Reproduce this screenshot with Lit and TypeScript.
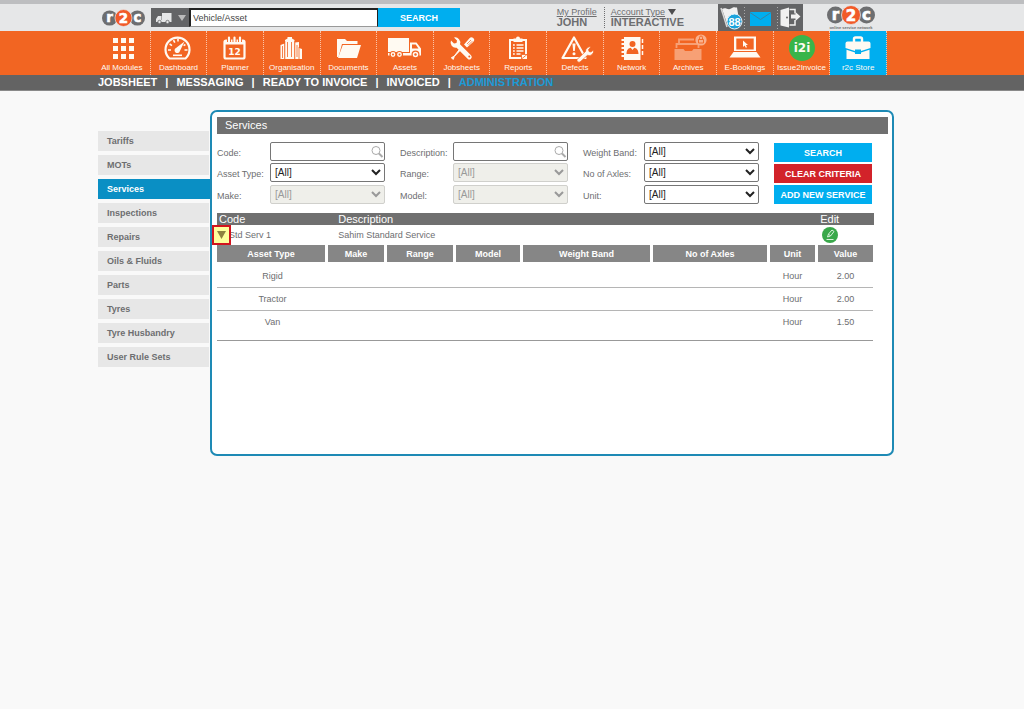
import { LitElement, html, svg, css, nothing } from "lit";
import { customElement, property } from "lit/decorators.js";
import { classMap } from "lit/directives/class-map.js";

const icons: Record<string, unknown> = {
  modules: svg`${[0, 1, 2].map((r) => [0, 1, 2].map((c) => svg`<rect x=${9 + c * 8} y=${5 + r * 8} width="5" height="5"/>`))}`,
  dashboard: svg`
    <path d="M9.5 25.5A12 12 0 1 1 25.5 25.5Z" fill="none" stroke="currentColor" stroke-width="2.2"/>
    <g stroke="currentColor" stroke-width="1.6" fill="none">
      <path d="M8 17h3M9.6 11l2.4 1.6M13.5 7.2l1.3 2.4M18 5.8v2.6M27.5 17h-3M25.4 11.5l-1.8 1.1"/>
    </g>
    <path d="M24.5 8.5L19.8 18.2A2.7 2.7 0 1 1 16 15Z"/>
    <rect x="13" y="21.5" width="9" height="1.6"/>`,
  planner: svg`
    <rect x="7.5" y="7.5" width="20" height="18" rx="1.5" fill="none" stroke="currentColor" stroke-width="2.2"/>
    <path d="M7.5 8h20v3.500h-20Z"/>
    <path d="M12 4v5M17.500 4v5M23 4v5" stroke="#f26522" stroke-width="4"/>
    <path d="M12 4.500v4M17.500 4.500v4M23 4.500v4" stroke="currentColor" stroke-width="2.200" stroke-linecap="round"/>
    <text x="17.500" y="21.500" text-anchor="middle" font-size="9" font-weight="bold" font-family="DejaVu Sans, sans-serif">12</text>`,
  organisation: svg`
    <path d="M6.500 26V12l4-1.500V26ZM11 26V7l2.500-1.500V4h4.500v1.500l2.500 1.500V26ZM21 26V9.500l4-.5v17ZM25 26V15l3 1v10Z"/>
    <g stroke="#f26522" stroke-width=".8"><path d="M8.500 13v12M13.500 9v15M17.500 9v15M23 12v12M10.800 8v18M20.800 8v18M25 14v12"/></g>`,
  documents: svg`<path d="M7 24V6h8l2 2h10.500v3H12L8.500 24Z"/><path d="M12.800 12H31l-4 13H8Z"/>`,
  assets: svg`
    <path d="M1 5h21v14H1Z"/><path d="M23 9.500h6.500l4.500 6v7H1V20h22Z"/>
    <path d="M25 11.500h3.700l2.800 4H25Z" fill="#f26522"/>
    <g stroke="#f26522" stroke-width="1.200"><circle cx="6" cy="21.500" r="3"/><circle cx="12.500" cy="21.500" r="3"/><circle cx="28.500" cy="21.500" r="3.400"/></g>
    <g fill="#f26522"><circle cx="6" cy="21.500" r="1"/><circle cx="12.500" cy="21.500" r="1"/><circle cx="28.500" cy="21.500" r="1.200"/></g>`,
  jobsheets: svg`
    <path d="M7 7.500l3 3 2.500-.5.500-2.500-3-3a5.200 5.200 0 0 1 6 6.800l11 11a2.400 2.400 0 0 1-3.400 3.400l-11-11A5.200 5.200 0 0 1 7 7.500Z"/>
    <path d="M20 11.500l5.500-6.300a2.600 2.600 0 0 1 3.900 3.600L23 14.500Z"/>
    <path d="M16.300 17.200l-6 6.200-1 3-2-1.600 3-1.800 5-6.500Z" stroke="currentColor"/>
    <path d="M23 11l4-4M24.300 12.200l4-4" stroke="#f26522" stroke-width=".7"/>
    <circle cx="25.300" cy="23.500" r="1" fill="#f26522"/>`,
  reports: svg`
    <path fill-rule="evenodd" d="M9 6h18v20H9ZM11 8v16h14V8Z"/>
    <path d="M13.500 9V5.500h2.500a2 2 0 0 1 4 0h2.500V9Z"/>
    <path d="M16.500 12h7M16.500 15h7M16.500 18h7M16.500 21h4M13 12h1.800M13 15h1.800M13 18h1.800M13 21h1.800" stroke="currentColor" stroke-width="1.300"/>
    <path d="M21.500 26v-4.500H27Z" stroke="#f26522" stroke-width=".8"/>`,
  defects: svg`
    <path d="M17 4.500L28.500 25H5.500Z" fill="none" stroke="currentColor" stroke-width="2.200" stroke-linejoin="round"/>
    <path d="M15.400 10.500h3.200l-.8 7.500h-1.600Z"/><circle cx="17" cy="20.700" r="1.500"/>
    <path d="M20 26.500l8.500-8a4.500 4.500 0 0 1 5.500-4.500l-2.500 2.500 .5 2 2 .5 2.500-2a4.500 4.500 0 0 1-6 5.300l-7.500 6.700a2.200 2.200 0 0 1-3-2.500Z" stroke="#f26522" stroke-width=".7"/>`,
  network: svg`
    <path d="M10 4h16.500v23H10Z"/>
    <path d="M7.500 7h4M7.500 11h4M7.500 15h4M7.500 19h4M7.500 23h4" stroke="currentColor" stroke-width="1.800"/>
    <path d="M28.500 6v4M28.500 12v4M28.500 18v4" stroke="currentColor" stroke-width="1.500"/>
    <g fill="#f26522"><circle cx="18.500" cy="11" r="3"/><path d="M12.500 21c0-4.500 2.500-6 4.200-6.200l1.800 2.200 1.800-2.200c1.700.2 4.200 1.700 4.200 6.200Z"/></g>`,
  archives: svg`
    <g opacity=".4"><path d="M4.500 16h9l1.500 2h7l1.500-2h8v11h-27Z"/>
    <path d="M6.500 15V11h22v4M9 10V6.500h15" fill="none" stroke="currentColor" stroke-width="1.800"/></g>
    <circle cx="31" cy="7" r="5.600" fill="#f9b08c"/>
    <path d="M28.500 6.500h5v3.500h-5ZM29.500 6.500V4.500a1.500 1.500 0 0 1 3 0v2" fill="none" stroke="#f26522" stroke-width=".9"/>`,
  ebookings: svg`
    <path fill-rule="evenodd" d="M7 3.500h22V18H7ZM9.300 5.500V16.500H26.700V5.500Z"/>
    <path d="M6.500 19h23l4 5.500H2.500Z"/>
    <path d="M16 7.500v6.500l1.600-1.500 1.200 2.300 1.200-.6-1.200-2.200h2.200Z"/>`,
  i2i: svg`
    <circle cx="18" cy="15" r="13" fill="#39b54a"/>
    <text x="18" y="19" text-anchor="middle" font-size="12" font-weight="bold" font-family="DejaVu Sans, sans-serif">i2i</text>`,
  store: svg`
    <path d="M14 9V6a1.500 1.500 0 0 1 1.500-1.500h5A1.500 1.500 0 0 1 22 6v3" fill="none" stroke="currentColor" stroke-width="2.400"/>
    <path d="M5.500 10.500A2 2 0 0 1 7.500 8.500h21a2 2 0 0 1 2 2V15l-9.500 3v-1.500h-6V18L5.500 15Z"/>
    <path d="M6.500 16.800l8.500 2.700V21h6v-1.500l8.500-2.700V26h-23Z"/>`,
};

const modules: [string, string][] = [
  ["All Modules", "modules"], ["Dashboard", "dashboard"], ["Planner", "planner"],
  ["Organisation", "organisation"], ["Documents", "documents"], ["Assets", "assets"],
  ["Jobsheets", "jobsheets"], ["Reports", "reports"], ["Defects", "defects"],
  ["Network", "network"], ["Archives", "archives"], ["E-Bookings", "ebookings"],
  ["Issue2Invoice", "i2i"], ["r2c Store", "store"],
];
const sections = ["JOBSHEET", "MESSAGING", "READY TO INVOICE", "INVOICED", "ADMINISTRATION"];
const tabs = ["Tariffs", "MOTs", "Services", "Inspections", "Repairs", "Oils & Fluids", "Parts", "Tyres", "Tyre Husbandry", "User Rule Sets"];

type Field = { label: string; kind: "text" | "select"; disabled?: boolean };
const fields: Field[] = [
  { label: "Code", kind: "text" }, { label: "Description", kind: "text" }, { label: "Weight Band", kind: "select" },
  { label: "Asset Type", kind: "select" }, { label: "Range", kind: "select", disabled: true }, { label: "No of Axles", kind: "select" },
  { label: "Make", kind: "select", disabled: true }, { label: "Model", kind: "select", disabled: true }, { label: "Unit", kind: "select" },
];
const columns: [string, number][] = [
  ["Asset Type", 111], ["Make", 59], ["Range", 69], ["Model", 67],
  ["Weight Band", 130], ["No of Axles", 117], ["Unit", 48], ["Value", 55],
];
const rates = [
  ["Rigid", "", "", "", "", "", "Hour", "2.00"],
  ["Tractor", "", "", "", "", "", "Hour", "2.00"],
  ["Van", "", "", "", "", "", "Hour", "1.50"],
];

@customElement("r2c-logo")
class R2cLogo extends LitElement {
  @property({ type: Boolean }) tagline = false;
  static styles = css`:host { display: block; } svg { display: block; }`;
  render() {
    return html`<svg width=${this.tagline ? 48 : 43} height=${this.tagline ? 26 : 18} viewBox="0 0 48 ${this.tagline ? 26 : 20}" role="img" aria-label="r2c">
      <circle cx="8.500" cy="10" r="8.500" fill="#6d6e70"/><circle cx="39.500" cy="10" r="8.500" fill="#6d6e70"/>
      <circle cx="24" cy="10" r="9.500" fill="#f15a29" stroke="#e6e7e8" stroke-width=".8"/>
      <g fill="#fff" stroke="#fff" stroke-width=".6" font-family="DejaVu Sans, sans-serif" font-weight="bold" text-anchor="middle">
        <text x="8.500" y="14.500" font-size="15">r</text><text x="24" y="15.500" font-size="15">2</text><text x="39.500" y="14.500" font-size="15">c</text>
      </g>
      ${this.tagline ? svg`<text x="24" y="24" text-anchor="middle" font-size="4" font-weight="bold" fill="#6d6e70" font-family="Liberation Sans, sans-serif">online service network</text>` : nothing}
    </svg>`;
  }
}

@customElement("app-root")
class AppRoot extends LitElement {
  static styles = css`
    :host { display: block; min-height: 100vh; background: #f9f9f9; color: #6d6e70; font: 9px/12px "Liberation Sans", Arial, sans-serif; }
    * { box-sizing: border-box; }
    ul { list-style: none; margin: 0; padding: 0; }
    a { color: inherit; text-decoration: none; }
    button { font: inherit; border: 0; padding: 0; cursor: pointer; }
    svg { display: block; fill: currentColor; }
    .wrap { margin: 0 137px 0 94px; }
    .top { background: #e6e7e8; border-top: 4px solid #bdbec0; }
    .topbar { display: flex; align-items: center; height: 27px; padding: 0 12px 0 8px; }
    .finder { display: flex; height: 19px; margin-left: 6px; }
    .kind { display: flex; align-items: center; gap: 6px; width: 38px; padding-left: 5px; background: #636466; color: #e6e7e8; }
    .finder input { width: 189px; border: 2px solid #222; border-right-width: 1px; border-bottom: 1px solid #999; padding: 0 2px; background: #fff; color: #444; font: inherit; border-radius: 0; }
    .go { width: 82px; background: #00aeef; color: #fff; font-weight: bold; }
    .who { display: flex; margin-left: auto; line-height: 10px; }
    .who div + div { margin-left: 7px; padding-left: 6px; border-left: 1px dotted #6d6e70; }
    .who a { display: flex; align-items: center; gap: 3px; }
    .who u { text-decoration: underline; }
    .who strong { display: block; font-size: 11px; line-height: 11px; }
    .tools { display: flex; height: 27px; margin: 0 24px 0 34px; background: #636466; color: #f1f1f1; }
    .modules { background: #f26522; color: #fffaf2; }
    .modules ul { display: grid; grid-template-columns: repeat(14, 1fr); }
    .modules li { border-right: 1px dotted #fbc4a8; }
    .modules a { display: flex; flex-direction: column; align-items: center; height: 44px; padding-top: 2px; font-size: 8px; line-height: 9px; white-space: nowrap; }
    .modules .store { background: #00aeef; }
    .sections { background: #636363; border-bottom: 1px solid #8a8a8a; color: #fff; font-size: 11px; font-weight: bold; line-height: 15px; }
    .sections ul { display: flex; padding-left: 4px; white-space: nowrap; }
    .sections li + li::before { content: "|"; margin: 0 8px; }
    .sections .on { color: #1c9ad6; }
    main { display: flex; align-items: flex-start; margin: 19px 130px 0 98px; }
    .tabs { display: grid; gap: 4px; width: 112px; padding-top: 21px; font-weight: bold; }
    .tabs a { display: block; margin-right: 1px; padding: 4px 9px; background: #e7e7e7; }
    .tabs .on { margin-right: 0; background: #0a8fc4; color: #fff; }
    .panel { flex: 1; min-height: 346px; padding: 5px 4px 5px 5px; border: 2px solid #1e8ab5; border-radius: 7px; background: #fff; }
    h1 { margin: 0; padding-left: 8px; background: #707070; color: #fff; font-size: 11px; font-weight: normal; line-height: 17px; }
    .criteria { display: flex; justify-content: space-between; margin: 8px 16px 0 0; }
    .fields { display: grid; grid-template-columns: repeat(3, auto); gap: 2px 15px; }
    .field { display: flex; justify-content: space-between; align-items: center; height: 19px; }
    .field label { width: 53px; padding-top: 3px; white-space: nowrap; }
    .field:nth-child(3n) label { width: 61px; }
    .box { position: relative; width: 115px; height: 19px; }
    .box input, .box select { width: 100%; height: 19px; margin: 0; border: 1px solid #767676; border-radius: 2px; background: #fff; color: #222; font: 10px "Liberation Sans", Arial, sans-serif; }
    .box select:disabled { border-color: #d0d0cc; background: #efefea; color: #999; opacity: 1; }
    .box svg { position: absolute; right: 1px; top: 3px; }
    .actions { display: grid; gap: 2px; width: 98px; margin-top: 1px; }
    .actions button { height: 19px; background: #00aeef; color: #fff; font-weight: bold; }
    .actions .clear { background: #d2232a; }
    .results { margin: 9px 14px 0 0; }
    table { width: 100%; table-layout: fixed; border-spacing: 0; }
    td, th { padding: 0; }
    .list > thead th { background: #707070; color: #fff; font-size: 11px; font-weight: normal; text-align: left; padding-left: 2px; }
    .list .desc { padding-left: 1px; }
    .list .mid { text-align: center; padding: 0; }
    .item td { position: relative; height: 20px; }
    .item .code { padding-left: 12px; }
    .expand { position: absolute; z-index: 1; left: -5px; top: 0; width: 19px; height: 20px; padding: 2px 0 0 3px; border: 2px solid #d2141e; background: #ffff9c; color: #8f8240; }
    .edit { display: block; margin: 0 auto; background: none; }
    .rates { width: calc(100% - 1px); }
    .rates th { height: 17px; border-right: 3px solid #fff; background: #868686; color: #fff; font-weight: bold; }
    .rates th:last-child { border-right: 0; }
    .rates td { height: 23px; border-bottom: 1px solid #b5b5b5; text-align: center; }
    .rates td:nth-child(7) { padding-right: 3px; }
    .rates tr:first-child td { height: 26px; padding-top: 3px; }
    .rates tr:last-child td { height: 30px; padding-bottom: 7px; border-color: #999; }
  `;

  private field(f: Field) {
    const id = f.label.toLowerCase().replace(/ /g, "-");
    return html`<div class="field"><label for=${id}>${f.label}:</label><div class="box">
      ${f.kind === "text"
        ? html`<input id=${id} type="text"><svg width="14" height="14" viewBox="0 0 14 14"><g fill="none" stroke="#aaa"><circle cx="6" cy="5.500" r="4"/><path d="M9 8.500l3.500 3.500" stroke-width="2"/></g></svg>`
        : html`<select id=${id} ?disabled=${f.disabled}><option>[All]</option></select>`}
    </div></div>`;
  }

  render() {
    return html`
      <header class="top"><div class="wrap topbar">
        <r2c-logo></r2c-logo>
        <form class="finder" @submit=${(e: Event) => e.preventDefault()}>
          <button class="kind" type="button" aria-label="Search type">
            <svg width="16" height="12" viewBox="0 0 16 12"><path d="M6 1h9.500v9H0V7l2-3h3.500v4H6Z"/><g stroke="#636466" stroke-width=".8"><circle cx="3.500" cy="10" r="1.700"/><circle cx="11.500" cy="10" r="1.700"/></g></svg>
            <svg width="8" height="6" viewBox="0 0 8 6"><path d="M0 0h8L4 6Z" fill="#bbb"/></svg>
          </button>
          <input type="text" aria-label="Vehicle/Asset" value="Vehicle/Asset">
          <button class="go">SEARCH</button>
        </form>
        <div class="who">
          <div><a href="#"><u>My Profile</u></a><strong>JOHN</strong></div>
          <div><a href="#"><u>Account Type</u><svg width="8" height="6" viewBox="0 0 8 6"><path d="M0 0h8L4 6Z" fill="#4d4d4f"/></svg></a><strong>INTERACTIVE</strong></div>
        </div>
        <div class="tools">
          <svg width="85" height="27" viewBox="0 0 85 27" role="img" aria-label="Notifications, messages, log out">
            <path d="M4 5c4-2 6 1.500 9-.5s4-1 6-1l2 12c-4-1-6 2-10 1.500L8.500 18Z"/>
            <path d="M3 4L9 23" stroke="#d8d8d8" stroke-width="1.500" fill="none"/>
            <circle cx="16.500" cy="17.500" r="7.500" fill="#1ba3dc" stroke="#e8f5fb" stroke-width="1"/>
            <text x="16.500" y="21.500" text-anchor="middle" font-size="11" font-weight="bold" fill="#fff" font-family="Liberation Sans, sans-serif">88</text>
            <path d="M26.500 3v22M59.500 3v22" stroke="#aaa" stroke-dasharray="1 2"/>
            <path d="M32 8h21v14H32Z" fill="#00aeef"/><path d="M32 8.500l10.500 7 10.500-7" fill="none" stroke="#3a82a3"/>
            <path d="M62.500 6L71 3.500v20l-8.500-2Z"/><path d="M71.500 5.500H77v4M77 16v5h-5.500" fill="none" stroke="currentColor" stroke-width="1.500"/>
            <path d="M73 10.500h4.500V8l5 4.500-5 4.500v-2.500H73Z"/><circle cx="69" cy="13.500" r="1" fill="#636466"/>
          </svg>
        </div>
        <r2c-logo tagline></r2c-logo>
      </div></header>
      <nav class="modules"><ul class="wrap">
        ${modules.map(([name, icon]) => html`<li class=${classMap({ store: icon === "store" })}><a href="#"><svg width="36" height="30" viewBox="0 0 36 30" overflow="visible">${icons[icon]}</svg>${name}</a></li>`)}
      </ul></nav>
      <nav class="sections"><ul class="wrap">
        ${sections.map((s) => html`<li><a href="#" class=${classMap({ on: s === "ADMINISTRATION" })}>${s}</a></li>`)}
      </ul></nav>
      <main>
        <nav class="tabs">${tabs.map((t) => html`<a href="#" class=${classMap({ on: t === "Services" })}>${t}</a>`)}</nav>
        <section class="panel">
          <h1>Services</h1>
          <form class="criteria" @submit=${(e: Event) => e.preventDefault()}>
            <div class="fields">${fields.map((f) => this.field(f))}</div>
            <div class="actions"><button>SEARCH</button><button class="clear" type="reset">CLEAR CRITERIA</button><button type="button">ADD NEW SERVICE</button></div>
          </form>
          <div class="results">
            <table class="list">
              <colgroup><col style="width:18.300%"><col><col style="width:13.500%"></colgroup>
              <thead><tr><th>Code</th><th class="desc">Description</th><th class="mid">Edit</th></tr></thead>
              <tbody><tr class="item">
                <td class="code"><button class="expand" aria-label="Collapse"><svg width="10" height="12" viewBox="0 0 10 12"><path d="M0 1h9L4.500 9Z"/></svg></button>Std Serv 1</td>
                <td class="desc">Sahim Standard Service</td>
                <td class="mid"><button class="edit" aria-label="Edit Std Serv 1"><svg width="16" height="16" viewBox="0 0 16 16"><circle cx="8" cy="8" r="8" fill="#39a84a"/><path d="M5.500 10l1-3 3.500-4 2 1.500-3.500 4.500ZM6.500 7l2 2M4.500 12.500h7" fill="none" stroke="#d9f2dc"/></svg></button></td>
              </tr></tbody>
            </table>
            <table class="rates">
              <colgroup>${columns.map(([, w]) => html`<col style="width:${w}px">`)}</colgroup>
              <thead><tr>${columns.map(([c]) => html`<th>${c}</th>`)}</tr></thead>
              <tbody>${rates.map((r) => html`<tr>${r.map((v) => html`<td>${v}</td>`)}</tr>`)}</tbody>
            </table>
          </div>
        </section>
      </main>`;
  }
}
